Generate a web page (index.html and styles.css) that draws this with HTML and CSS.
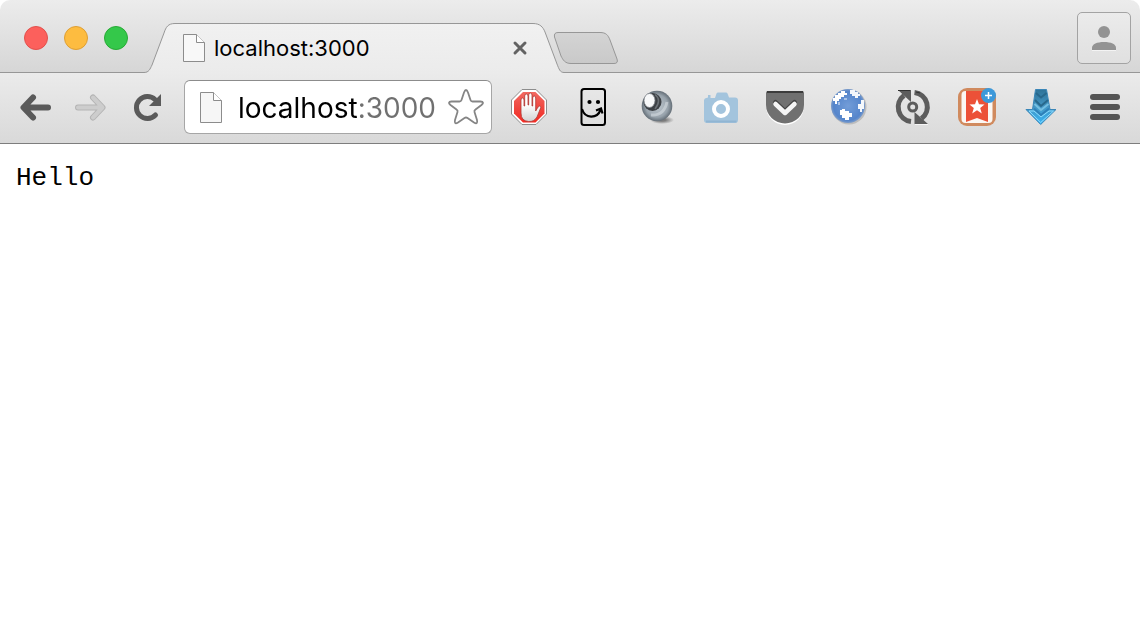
FILE: index.html
```html
<!DOCTYPE html>
<html lang="en">
<head>
    <meta charset="UTF-8">
    <meta name="viewport" content="width=device-width, initial-scale=1.0">
    <title>localhost:3000</title>
    <link rel="stylesheet" href="styles.css">
</head>
<body>

<div class="browser">
    <header class="tab-strip">
        <div class="window-buttons">
            <button class="dot close" aria-label="Close window"></button>
            <button class="dot minimize" aria-label="Minimize window"></button>
            <button class="dot zoom" aria-label="Zoom window"></button>
        </div>

        <div class="tab">
            <svg class="tab-shape" width="420" height="51" viewBox="0 0 420 51">
                <defs>
                    <linearGradient id="tab-fill" x1="0" y1="0" x2="0" y2="1">
                        <stop offset="0" stop-color="#f1f1f1"/>
                        <stop offset="1" stop-color="#ebebeb"/>
                    </linearGradient>
                </defs>
                <path d="M0 51V49.500C5 49.500 6 46 8 42L20 10C22 4 24 .5 31 .5H389C396 .5 399 4 401 9L413 41C415 46 416 49.500 420 49.500V51Z" fill="url(#tab-fill)"/>
                <path d="M0 49.500C5 49.500 6 46 8 42L20 10C22 4 24 .5 31 .5H389C396 .5 399 4 401 9L413 41C415 46 416 49.500 420 49.500" fill="none" stroke="#979797"/>
            </svg>
            <svg class="page-icon" width="24" height="30" viewBox="0 0 24 30">
                <path d="M1.500 1.500H14.500L22.500 9.500V28.500H1.500Z" fill="#f8f8f8" stroke="#8c8c8c"/>
                <path d="M14.500 1.500V9.500H22.500" fill="#fff" stroke="#8c8c8c"/>
            </svg>
            <span class="tab-title">localhost:3000</span>
            <button class="tab-close" aria-label="Close tab">
                <svg width="16" height="16" viewBox="0 0 16 16">
                    <path d="M3 3L13 13M13 3L3 13" stroke="#636363" stroke-width="3" stroke-linecap="round"/>
                </svg>
            </button>
        </div>

        <button class="new-tab" aria-label="New tab">
            <svg width="66" height="34" viewBox="0 0 66 34">
                <defs>
                    <linearGradient id="new-fill" x1="0" y1="0" x2="0" y2="1">
                        <stop offset="0" stop-color="#d4d4d4"/>
                        <stop offset="1" stop-color="#c9c9c9"/>
                    </linearGradient>
                </defs>
                <path d="M5 1.500H47C53 1.500 55 4 57 9L64 28C65 31 64 32.500 61 32.500H18C12 32.500 10 29 8 25L1.500 6C1 3 2 1.500 5 1.500Z" fill="url(#new-fill)" stroke="#979797"/>
            </svg>
        </button>

        <button class="profile" aria-label="Profile">
            <svg width="40" height="40" viewBox="0 0 40 40" fill="#939393">
                <circle cx="20" cy="14" r="6"/>
                <path d="M8 32V30C8 26 13 24 20 24S32 26 32 30V32Z"/>
                <path d="M8 32.500H32" stroke="#fff" stroke-opacity=".6"/>
            </svg>
        </button>
    </header>

    <nav class="toolbar">
        <button class="tool nav" aria-label="Back">
            <svg width="40" height="40" viewBox="0 0 40 40" fill="none" stroke="#5a5a5a" stroke-width="6" stroke-linecap="round" stroke-linejoin="round">
                <path d="M32 20.500H8M17 10.500L7.500 20.500L17 30.500"/>
            </svg>
        </button>
        <button class="tool nav" aria-label="Forward">
            <svg width="40" height="40" viewBox="0 0 40 40" fill="none" stroke-linecap="round" stroke-linejoin="round">
                <path d="M6 20.500H30M21 10.500L30.500 20.500L21 30.500" stroke="#b4b4b4" stroke-width="6"/>
                <path d="M6 20.500H30M21 10.500L30.500 20.500L21 30.500" stroke="#cdcdcd" stroke-width="4"/>
            </svg>
        </button>
        <button class="tool nav" aria-label="Reload">
            <svg width="40" height="40" viewBox="0 0 40 40">
                <path d="M27.500 28A11 11 0 1 1 27 12.500" fill="none" stroke="#5a5a5a" stroke-width="5" stroke-linecap="round"/>
                <path d="M33 7V19H21Z" fill="#5a5a5a"/>
            </svg>
        </button>

        <div class="address-bar">
            <svg class="page-icon" width="24" height="34" viewBox="0 0 24 34">
                <path d="M1.500 2.500H14.500L22.500 10.500V32.500H1.500Z" fill="#f6f6f6" stroke="#8c8c8c"/>
                <path d="M14.500 2.500V10.500H22.500" fill="#fff" stroke="#8c8c8c"/>
            </svg>
            <input class="address" type="text" value="localhost:3000" aria-label="Address">
            <button class="bookmark" aria-label="Bookmark this page">
                <svg width="38" height="38" viewBox="0 0 38 38">
                    <path d="M17 4.500Q19 -.5 21 4.500L23.500 12Q24 13.500 25.500 13.500L33.500 13.500Q38 14 34.500 17L28.500 21.500Q27 22.500 27.500 24L30 32Q31 37 27 34.500L20.500 30Q19 29 17.500 30L11 34.500Q7 37 8 32L10.500 24Q11 22.500 9.500 21.500L3.500 17Q0 14 4.500 13.500L12.500 13.500Q14 13.500 14.500 12Z" fill="#fff" stroke="#858585" stroke-width="1.800" stroke-linejoin="round"/>
                </svg>
            </button>
        </div>

        <button class="tool" aria-label="Ad blocker">
            <svg width="40" height="40" viewBox="0 0 40 40">
                <defs>
                    <linearGradient id="stop-red" x1="0" y1="0" x2="0" y2="1">
                        <stop offset="0" stop-color="#f26a62"/>
                        <stop offset=".55" stop-color="#f0443d"/>
                        <stop offset="1" stop-color="#f22b24"/>
                    </linearGradient>
                    <linearGradient id="hand-fill" x1="0" y1="0" x2="0" y2="1">
                        <stop offset=".4" stop-color="#fff"/>
                        <stop offset="1" stop-color="#d2d2d2"/>
                    </linearGradient>
                </defs>
                <path d="M13 2.500H27L37.500 13V27L27 37.500H13L2.500 27V13Z" fill="#fff" stroke="#8d8d8d"/>
                <path d="M14 5H26.500L35.500 14V26.500L26.500 35.500H14L5 26.500V14Z" fill="url(#stop-red)"/>
                <path d="M12 23V13Q12 11 13.500 11T15 13V19H15.700V9Q15.700 7 17.300 7T19 9V18H19.700V8Q19.700 6 21.300 6T23 8V19H23.700V11Q23.700 9 25.200 9T26.700 11V24L29 20Q31 18 32 20L28 30Q25 35 19.500 34.500Q12 34 12 26Z" fill="url(#hand-fill)" stroke="#ad3934" stroke-width=".8"/>
            </svg>
        </button>
        <button class="tool" aria-label="Smile">
            <svg width="40" height="40" viewBox="0 0 40 40" fill="none" stroke="#000" stroke-width="2.200">
                <rect x="8.500" y="2" width="23.500" height="36" rx="2.500" stroke-width="2"/>
                <circle cx="16.500" cy="15" r="2.100" fill="#000" stroke="none"/>
                <circle cx="25" cy="15" r="2.100" fill="#000" stroke="none"/>
                <path d="M9 22C12 32 24 32 27.500 23M23 23.500L28 21.500L29.500 26.500"/>
            </svg>
        </button>
        <button class="tool" aria-label="Sphere">
            <svg width="40" height="40" viewBox="0 0 40 40">
                <defs>
                    <radialGradient id="ball" cx=".5" cy=".5" r=".52">
                        <stop offset="0" stop-color="#c0c9d0"/>
                        <stop offset=".7" stop-color="#98a3ac"/>
                        <stop offset="1" stop-color="#5c666f"/>
                    </radialGradient>
                    <radialGradient id="ball-shade">
                        <stop offset=".3" stop-color="#000" stop-opacity=".45"/>
                        <stop offset="1" stop-color="#000" stop-opacity="0"/>
                    </radialGradient>
                </defs>
                <ellipse cx="25" cy="33" rx="12" ry="4" fill="url(#ball-shade)"/>
                <circle cx="20" cy="19" r="15.300" fill="url(#ball)"/>
                <path d="M14 28Q27 29 30 15" fill="none" stroke="#d5dce1" stroke-width="3" opacity=".6"/>
                <circle cx="15.500" cy="15" r="9" fill="#3c4045"/>
                <path d="M18 7.500Q25 13 18 22" fill="none" stroke="#6a7075" stroke-width="1.500"/>
                <ellipse cx="12.500" cy="13.500" rx="5.500" ry="7" fill="#f7f8f9" stroke="#7c8288" stroke-width=".8"/>
            </svg>
        </button>
        <button class="tool" aria-label="Screenshot">
            <svg width="40" height="40" viewBox="0 0 40 40">
                <path d="M7 8H9.500V11H14L15.500 6.500Q16 5.500 17 5.500H25Q26 5.500 26.500 6.500L28 10.500H34Q37 10.500 37 13.500V33Q37 36 34 36H6Q3 36 3 33V13.500Q3 11 7 10.500Z" fill="#a3c4dd"/>
                <path d="M5 34.500H35.500" stroke="#90b5d2" stroke-width="2"/>
                <circle cx="20" cy="22" r="7" fill="#a3c4dd" stroke="#fff" stroke-width="4"/>
            </svg>
        </button>
        <button class="tool" aria-label="Save to Pocket">
            <svg width="40" height="40" viewBox="0 0 40 40">
                <path d="M3 5.500H37Q39 5.500 39 7.500V19.500A19 18.500 0 0 1 1 19.500V7.500Q1 5.500 3 5.500Z" fill="#fff"/>
                <path d="M3 4H37Q39 4 39 6V18A19 18.500 0 0 1 1 18V6Q1 4 3 4Z" fill="#707070"/>
                <path d="M2 5H38" stroke="#3c3c3c" stroke-width="2"/>
                <path d="M10.500 15.500L20 24.500L29.500 15.500" fill="none" stroke="#454545" stroke-width="5" stroke-linecap="round" stroke-linejoin="round"/>
                <path d="M10.500 17L20 26L29.500 17" fill="none" stroke="#f5f5f5" stroke-width="4.500" stroke-linecap="round" stroke-linejoin="round"/>
            </svg>
        </button>
        <button class="tool" aria-label="Globe">
            <svg width="40" height="40" viewBox="0 0 40 40">
                <defs>
                    <radialGradient id="sea" cx=".5" cy=".5" r=".5">
                        <stop offset="0" stop-color="#739dd8"/>
                        <stop offset=".85" stop-color="#5585cb"/>
                        <stop offset="1" stop-color="#7c9cca"/>
                    </radialGradient>
                </defs>
                <circle cx="20" cy="20" r="17.500" fill="#bdbdbd"/>
                <circle cx="19" cy="19" r="17" fill="url(#sea)"/>
                <path d="M9 6H12V4H16V6H18V8H15V10H12V12H10V14H8V17H6V14H4V11H6V8H9Z" fill="#fff"/>
                <path d="M21 3H26V5H29V7H31V9H29V11H26V9H23V7H21Z" fill="#f4f7fb"/>
                <path d="M32 13H35V22H33V25H31V22H29V17H32Z" fill="#f5f8fc"/>
                <path d="M11 23H13V22H16V24H20V26H23V30H20V33H16V31H13V28H11Z" fill="#fff"/>
                <path d="M9 15H11V18H9ZM15 11H18V13H15Z" fill="#a9c3e8"/>
            </svg>
        </button>
        <button class="tool" aria-label="Sync">
            <svg width="40" height="40" viewBox="0 0 40 40">
                <g fill="none" stroke="#5c5c5c" stroke-width="5">
                    <path d="M18 34.500A14.500 14.500 0 0 1 11 8.500"/>
                    <path d="M21.500 5.500A14.500 14.500 0 0 1 28.500 31.500"/>
                    <circle cx="19.700" cy="20" r="4" stroke-width="3"/>
                </g>
                <path d="M5 3H18V15ZM21.500 25V37H35Z" fill="#5c5c5c"/>
                <path d="M5 3.500H17M23 5L27 6" stroke="#303030"/>
                <path d="M22 37.500H35" stroke="#fff" stroke-opacity=".7"/>
            </svg>
        </button>
        <button class="tool" aria-label="Wunderlist">
            <svg width="40" height="40" viewBox="0 0 40 40">
                <rect x="1" y="1" width="38" height="38" rx="9" fill="#d08a5e"/>
                <rect x="4.500" y="4" width="31" height="32" rx="4" fill="#fbf7f3"/>
                <path d="M9 4H31V35L20 31L9 35Z" fill="#ec5138"/>
                <path d="M20 12L22 17.300L27.500 17.500L23.200 21L24.800 26.500L20 23.300L15.200 26.500L16.800 21L12.500 17.500L18 17.300Z" fill="#fff"/>
                <circle cx="31.500" cy="8.500" r="7.500" fill="#3d99da"/>
                <path d="M31.500 5V12M28 8.500H35" stroke="#fff" stroke-width="1.500"/>
            </svg>
        </button>
        <button class="tool" aria-label="Download">
            <svg width="40" height="40" viewBox="0 0 40 40">
                <defs>
                    <linearGradient id="down" x1="0" y1="0" x2="0" y2="1">
                        <stop offset="0" stop-color="#2f7398"/>
                        <stop offset=".5" stop-color="#4496c4"/>
                        <stop offset="1" stop-color="#38b5f5"/>
                    </linearGradient>
                </defs>
                <path d="M14.500 2.500H25.500L29 22.500H35L19.700 37.500L5 22.500H11.500Z" fill="url(#down)" stroke="#3a86b8" stroke-linejoin="round"/>
                <path d="M15 6L20 10.500L25.500 6M14 13L20 19L27 13" fill="none" stroke="#28688c" stroke-width="2"/>
                <path d="M13.500 17L20 23L27.500 17" fill="none" stroke="#74bfe2" stroke-width="2"/>
                <path d="M13 21.500L20 28L28 21.500" fill="none" stroke="#2f80b8" stroke-width="2"/>
                <path d="M8 24H13L20 30L28 24H32.500L19.700 35.500Z" fill="none" stroke="#8cdcff"/>
            </svg>
        </button>
        <button class="tool" aria-label="Menu">
            <svg width="40" height="40" viewBox="0 0 40 40" fill="#555">
                <rect x="5" y="7" width="30" height="6" rx="3"/>
                <rect x="5" y="17" width="30" height="6" rx="3"/>
                <rect x="5" y="27" width="30" height="6" rx="3"/>
            </svg>
        </button>
    </nav>

    <main class="page">
        <pre>Hello</pre>
    </main>
</div>

</body>
</html>
```
FILE: styles.css
```css
body {
    font-family: Inter, Roboto, sans-serif;
    background-color: #fff;
    color: #000;
    margin: 0;
}

button {
    display: flex;
    align-items: center;
    justify-content: center;
    flex-shrink: 0;
    padding: 0;
    border: none;
    background: none;
    cursor: pointer;
}

svg {
    display: block;
    flex-shrink: 0;
}

.tab-strip {
    display: flex;
    align-items: flex-end;
    height: 72px;
    border-bottom: 1px solid #979797;
    border-radius: 10px 10px 0 0;
    background: linear-gradient(#ececec, #d6d6d6);
}

.window-buttons {
    display: flex;
    align-self: center;
    gap: 16px;
    padding: 4px 16px 0 24px;
}

.dot {
    width: 24px;
    height: 24px;
    border-radius: 50%;
}

.close {
    background-color: #fc605c;
    border: 1px solid #e2504c;
}

.minimize {
    background-color: #fdbc40;
    border: 1px solid #de9f34;
}

.zoom {
    background-color: #34c84a;
    border: 1px solid #27aa35;
}

.tab {
    position: relative;
    display: flex;
    align-items: center;
    box-sizing: border-box;
    width: 420px;
    height: 50px;
    margin-bottom: -1px;
    padding: 0 36px 0 38px;
}

/* Tab outline sits behind the label and covers the strip's border */
.tab-shape {
    position: absolute;
    left: 0;
    top: 0;
}

.tab .page-icon,
.tab-title,
.tab-close {
    position: relative;
}

.tab-title {
    flex: 1;
    margin-left: 8px;
    font-size: 22px;
    line-height: 28px;
}

.new-tab {
    margin: 0 0 7px -11px;
}

.profile {
    box-sizing: border-box;
    width: 54px;
    height: 52px;
    margin: 0 9px 8px auto;
    border: 1px solid #a3a3a3;
    border-radius: 5px;
    background: linear-gradient(#ebebeb, #e0e0e0);
}

.toolbar {
    display: flex;
    align-items: center;
    padding: 7px 3px 9px 8px;
    border-bottom: 1px solid #7d7d7d;
    background: linear-gradient(#ebebeb, #d9d9d9);
}

.tool {
    width: 64px;
    height: 40px;
}

.nav {
    width: 56px;
}

.address-bar {
    display: flex;
    flex: 1;
    align-items: center;
    box-sizing: border-box;
    min-width: 0;
    height: 54px;
    margin: 0 5px 0 8px;
    padding: 0 6px 0 14px;
    border: 1px solid #a6a6a6;
    border-top-color: #8c8c8c;
    border-radius: 6px;
    background-color: #fff;
}

/* Host is black, the port after it is grey */
.address {
    flex: 1;
    min-width: 0;
    margin-left: 15px;
    padding: 2px 0 0;
    border: none;
    outline: none;
    font-family: inherit;
    font-size: 28px;
    line-height: 36px;
    color: transparent;
    caret-color: #000;
    background: linear-gradient(to right, #000 119px, #707070 119px);
    -webkit-background-clip: text;
    background-clip: text;
}

.page {
    padding: 18px 16px;
}

.page pre {
    margin: 0;
    font-family: "Courier New", "Liberation Mono", monospace;
    font-size: 26px;
    line-height: 32px;
}
```
